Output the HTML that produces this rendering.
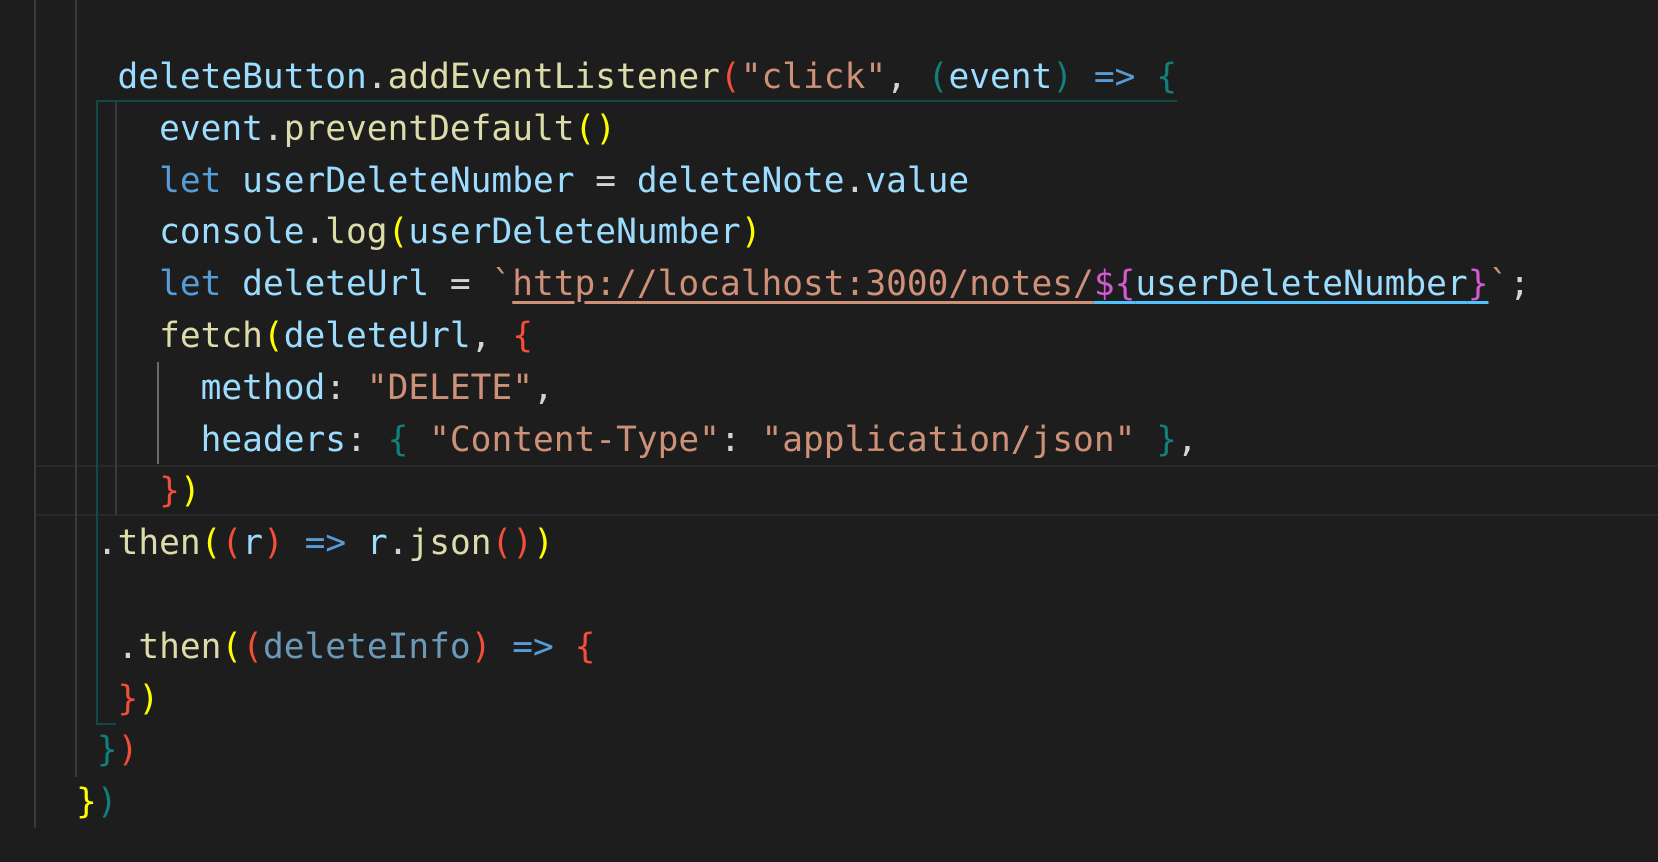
<!DOCTYPE html>
<html><head><style>
html,body{margin:0;padding:0;background:#1d1d1d;width:1658px;height:862px;overflow:hidden}
.code{position:absolute;left:76px;top:52px;margin:0;font-family:"DejaVu Sans Mono","Liberation Mono",monospace;font-size:34.5px;line-height:51.8px;color:#9cdcfe;white-space:pre}
.f{color:#dcdcaa}.k{color:#569cd6}.s{color:#ce9178}.p{color:#d4d4d4}
.y{color:#ffff00}.r{color:#f44d38}.t{color:#11807a}.pk{color:#d25ad2}.u{color:#6b9ab8}
.ul{text-decoration:underline;text-decoration-color:#ce9178;text-underline-offset:6px}
.ub{text-decoration:underline;text-decoration-color:#4fc1ff;text-underline-offset:6px}
.v{position:absolute;width:2px}
</style></head><body>
<div style="position:absolute;left:35px;top:465px;width:1623px;height:47px;border-top:2px solid #282828;border-bottom:2px solid #282828"></div>
<div class="v" style="left:34px;top:0;height:828px;background:#3a3a3a"></div>
<div class="v" style="left:75px;top:0;height:777px;background:#3a3a3a"></div>
<div class="v" style="left:115px;top:101px;height:414px;background:#3a3a3a"></div>
<div class="v" style="left:157px;top:362px;height:102px;background:#6a6a6a"></div>
<div style="position:absolute;left:96px;top:100px;width:1081px;height:2px;background:#104a46"></div>
<div style="position:absolute;left:96px;top:100px;width:2px;height:625px;background:#104a46"></div>
<div style="position:absolute;left:96px;top:723px;width:20px;height:2px;background:#104a46"></div>
<pre class="code">  deleteButton<span class="p">.</span><span class="f">addEventListener</span><span class="r">(</span><span class="s">"click"</span><span class="p">, </span><span class="t">(</span>event<span class="t">)</span> <span class="k">=&gt;</span> <span class="t">{</span>
    event<span class="p">.</span><span class="f">preventDefault</span><span class="y">()</span>
    <span class="k">let</span> userDeleteNumber <span class="p">=</span> deleteNote<span class="p">.</span>value
    console<span class="p">.</span><span class="f">log</span><span class="y">(</span>userDeleteNumber<span class="y">)</span>
    <span class="k">let</span> deleteUrl <span class="p">=</span> <span class="s">`<span class="ul">http://localhost:3000/notes/</span></span><span class="pk ub">${</span><span class="ub">userDeleteNumber</span><span class="pk ub">}</span><span class="s">`</span><span class="p">;</span>
    <span class="f">fetch</span><span class="y">(</span>deleteUrl<span class="p">, </span><span class="r">{</span>
      method<span class="p">: </span><span class="s">"DELETE"</span><span class="p">,</span>
      headers<span class="p">: </span><span class="t">{</span> <span class="s">"Content-Type"</span><span class="p">: </span><span class="s">"application/json"</span> <span class="t">}</span><span class="p">,</span>
    <span class="r">}</span><span class="y">)</span>
 <span class="p">.</span><span class="f">then</span><span class="y">(</span><span class="r">(</span>r<span class="r">)</span> <span class="k">=&gt;</span> r<span class="p">.</span><span class="f">json</span><span class="r">()</span><span class="y">)</span>

  <span class="p">.</span><span class="f">then</span><span class="y">(</span><span class="r">(</span><span class="u">deleteInfo</span><span class="r">)</span> <span class="k">=&gt;</span> <span class="r">{</span>
  <span class="r">}</span><span class="y">)</span>
 <span class="t">}</span><span class="r">)</span>
<span class="y">}</span><span class="t">)</span></pre>
</body></html>
